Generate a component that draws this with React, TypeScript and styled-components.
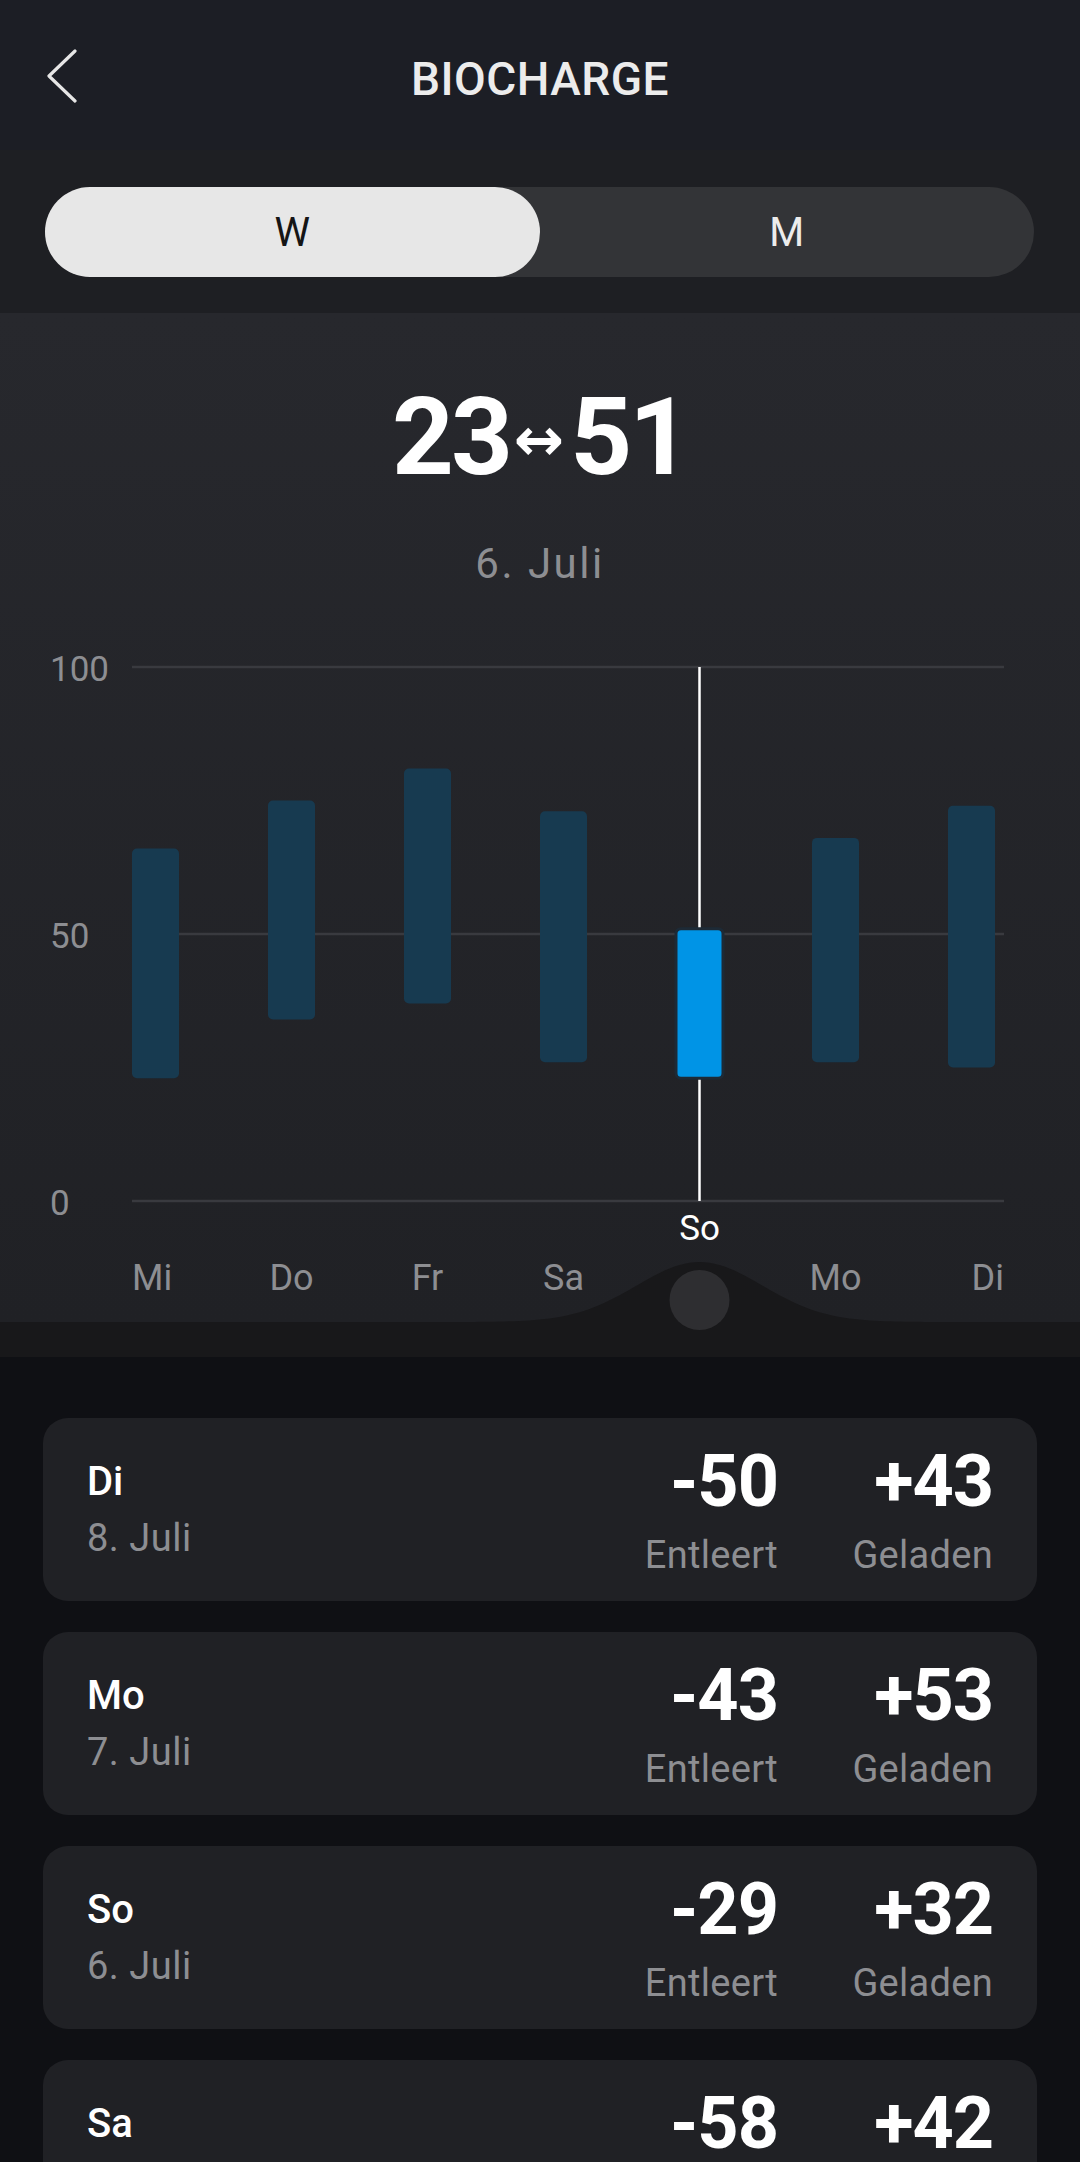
import { useState } from 'react';
import styled, { createGlobalStyle } from 'styled-components';

const GlobalStyle = createGlobalStyle`
  * {
    box-sizing: border-box;
  }

  body {
    margin: 0;
    background: #0f1014;
    font-family: Roboto, 'Noto Sans', sans-serif;
    -webkit-font-smoothing: antialiased;
  }
`;

const Page = styled.div`
  width: 1080px;
  min-height: 2162px;
  background: #0f1014;
  overflow: hidden;
`;

const Header = styled.header`
  height: 150px;
  padding-top: 7px;
  background: #1c1e25;
  display: grid;
  grid-template-columns: 1fr auto 1fr;
  align-items: center;
`;

const BackButton = styled.button`
  justify-self: start;
  margin: -6px 0 0 46px;
  padding: 0;
  border: none;
  background: none;
  color: #e6e6e6;
  display: flex;
  cursor: pointer;
`;

const Title = styled.h1`
  margin: 0;
  font-size: 46px;
  font-weight: 500;
  line-height: 1;
  letter-spacing: 0.5px;
  color: #ececec;
`;

const ToggleBar = styled.div`
  padding: 37px 46px 36px 45px;
  background: #1e1f23;
`;

const Toggle = styled.div`
  height: 90px;
  border-radius: 45px;
  background: #333437;
  display: grid;
  grid-template-columns: 1fr 1fr;
`;

const Segment = styled.button<{ $active: boolean }>`
  border: none;
  border-radius: 45px;
  background: ${(p) => (p.$active ? '#e7e7e7' : 'transparent')};
  color: ${(p) => (p.$active ? '#151515' : '#ececec')};
  font-family: inherit;
  font-size: 40px;
  font-weight: 400;
  cursor: pointer;
`;

const ChartPanel = styled.section`
  height: 1009px;
  padding-top: 70px;
  background: linear-gradient(180deg, #27282d 0%, #202125 100%);
  display: flex;
  flex-direction: column;
  align-items: center;
`;

const BigValue = styled.div`
  font-size: 108px;
  font-weight: 700;
  line-height: 1;
  letter-spacing: -3px;
  color: #ffffff;
  white-space: nowrap;
`;

const Arrow = styled.span`
  font-family: 'DejaVu Sans', sans-serif;
  font-size: 60px;
  font-weight: 700;
  letter-spacing: 0;
  margin: 0 6px 0 4px;
  vertical-align: 14px;
`;

const DateLabel = styled.div`
  margin-top: 52px;
  font-size: 42px;
  line-height: 1;
  letter-spacing: 2.5px;
  color: #8d8e92;
`;

const ChartSvg = styled.svg`
  display: block;
  overflow: visible;
  flex-shrink: 0;
`;

const Dock = styled.div`
  height: 35px;
  background: #18181a;
`;

const List = styled.div`
  padding: 61px 43px 40px;
  display: flex;
  flex-direction: column;
  gap: 31px;
`;

const Card = styled.div`
  height: 183px;
  padding: 0 44px;
  border-radius: 25px;
  background: #202125;
  display: flex;
  align-items: center;
`;

const DayInfo = styled.div`
  margin-right: auto;
  display: flex;
  flex-direction: column;
`;

const DayName = styled.div`
  font-size: 40px;
  font-weight: 500;
  line-height: 1;
  color: #ffffff;
`;

const DayDate = styled.div`
  margin-top: 17px;
  font-size: 38px;
  line-height: 1;
  letter-spacing: 0.5px;
  color: #8d8e92;
`;

const Stat = styled.div`
  width: 150px;
  display: flex;
  flex-direction: column;
  align-items: flex-end;

  & + & {
    margin-left: 65px;
  }
`;

const StatValue = styled.div`
  font-size: 72px;
  font-weight: 700;
  line-height: 1;
  letter-spacing: -1px;
  color: #ffffff;
`;

const StatLabel = styled.div`
  margin-top: 18px;
  font-size: 38px;
  line-height: 1;
  letter-spacing: 0.3px;
  color: #8d8e92;
`;

const bars = [
  { label: 'Mi', low: 23, high: 66 },
  { label: 'Do', low: 34, high: 75 },
  { label: 'Fr', low: 37, high: 81 },
  { label: 'Sa', low: 26, high: 73 },
  { label: 'So', low: 23, high: 51 },
  { label: 'Mo', low: 26, high: 68 },
  { label: 'Di', low: 25, high: 74 },
];

const entries = [
  { day: 'Di', date: '8. Juli', out: '-50', in: '+43' },
  { day: 'Mo', date: '7. Juli', out: '-43', in: '+53' },
  { day: 'So', date: '6. Juli', out: '-29', in: '+32' },
  { day: 'Sa', date: '5. Juli', out: '-58', in: '+42' },
];

// chart geometry (svg coords, svg top = page y 585)
const PLOT_LEFT = 132;
const PLOT_RIGHT = 1004;
const Y_ZERO = 616;
const SCALE = 5.34;
const STEP = 136;
const BAR_W = 47;
const SVG_H = 737;

const yOf = (v: number) => Y_ZERO - v * SCALE;

const bumpPath = (cx: number) => {
  const pts: string[] = [];
  for (let dx = -230; dx <= 230; dx += 5) {
    const y = SVG_H - 60 * Math.exp(-(dx * dx) / (2 * 63 * 63));
    pts.push(`${cx + dx},${y.toFixed(2)}`);
  }
  return `M ${cx - 230},${SVG_H + 4} L ${pts.join(' L ')} L ${cx + 230},${SVG_H + 4} Z`;
};

const Chart = ({ selected }: { selected: number }) => {
  const cx = PLOT_LEFT + selected * STEP + BAR_W / 2;

  return (
    <ChartSvg width={1080} height={SVG_H} viewBox={`0 0 1080 ${SVG_H}`}>
      {[0, 50, 100].map((v) => (
        <g key={v}>
          <line x1={PLOT_LEFT} x2={PLOT_RIGHT} y1={yOf(v)} y2={yOf(v)} stroke='#393a3f' strokeWidth={2.5} />
          <text x={50} y={yOf(v) + 14} fontSize={35} fill='#8d8e92' fontFamily='Roboto, sans-serif'>
            {v}
          </text>
        </g>
      ))}

      <line x1={cx} x2={cx} y1={yOf(100)} y2={Y_ZERO} stroke='#ffffff' strokeWidth={2.5} />

      {bars.map((b, i) => {
        const active = i === selected;
        return (
          <rect
            key={b.label}
            x={PLOT_LEFT + i * STEP}
            y={yOf(b.high)}
            width={BAR_W}
            height={(b.high - b.low) * SCALE}
            rx={5}
            fill={active ? '#0094e6' : '#173a50'}
            stroke={active ? '#1d2a36' : 'none'}
            strokeWidth={active ? 3 : 0}
          />
        );
      })}

      {bars.map((b, i) => {
        const center = PLOT_LEFT + i * STEP + BAR_W / 2;
        if (i === selected) {
          return (
            <text key={b.label} x={center} y={655} fontSize={35} fill='#ffffff' textAnchor='middle' fontFamily='Roboto, sans-serif'>
              {b.label}
            </text>
          );
        }
        const anchor = i === 0 ? 'start' : i === bars.length - 1 ? 'end' : 'middle';
        const x = i === 0 ? PLOT_LEFT : i === bars.length - 1 ? PLOT_RIGHT : center;
        return (
          <text key={b.label} x={x} y={705} fontSize={36} fill='#8d8e92' textAnchor={anchor} fontFamily='Roboto, sans-serif'>
            {b.label}
          </text>
        );
      })}

      <path d={bumpPath(cx)} fill='#18181a' />
      <circle cx={cx} cy={715} r={30} fill='#2e2e31' />
    </ChartSvg>
  );
};

const App = () => {
  const [range, setRange] = useState<'W' | 'M'>('W');
  const selected = 4;

  return (
    <Page>
      <GlobalStyle />
      <Header>
        <BackButton aria-label='Zurück'>
          <svg width='32' height='54' viewBox='0 0 32 54' fill='none'>
            <polyline points='29,2 3,27 29,52' stroke='currentColor' strokeWidth='3.2' strokeLinecap='round' strokeLinejoin='round' />
          </svg>
        </BackButton>
        <Title>BIOCHARGE</Title>
        <div />
      </Header>

      <ToggleBar>
        <Toggle>
          <Segment $active={range === 'W'} onClick={() => setRange('W')}>W</Segment>
          <Segment $active={range === 'M'} onClick={() => setRange('M')}>M</Segment>
        </Toggle>
      </ToggleBar>

      <ChartPanel>
        <BigValue>
          23<Arrow>↔</Arrow>51
        </BigValue>
        <DateLabel>6. Juli</DateLabel>
        <Chart selected={selected} />
      </ChartPanel>
      <Dock />

      <List>
        {entries.map((e) => (
          <Card key={e.day}>
            <DayInfo>
              <DayName>{e.day}</DayName>
              <DayDate>{e.date}</DayDate>
            </DayInfo>
            <Stat>
              <StatValue>{e.out}</StatValue>
              <StatLabel>Entleert</StatLabel>
            </Stat>
            <Stat>
              <StatValue>{e.in}</StatValue>
              <StatLabel>Geladen</StatLabel>
            </Stat>
          </Card>
        ))}
      </List>
    </Page>
  );
};

export default App;
